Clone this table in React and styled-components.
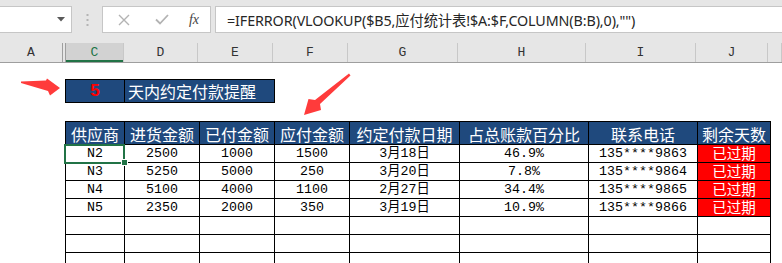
import React from "react";
import styled, { createGlobalStyle } from "styled-components";

const Global = createGlobalStyle`
  html, body { margin: 0; padding: 0; background: #fff; }
  body { width: 782px; height: 263px; overflow: hidden; }
`;

const Page = styled.div`
  position: relative;
  width: 782px;
  height: 263px;
  overflow: hidden;
  background: #fff;
  font-family: "Noto Sans", "Noto Sans CJK SC", sans-serif;
`;

const Toolbar = styled.div`
  display: flex;
  align-items: flex-start;
  height: 43px;
  box-sizing: border-box;
  padding-top: 6px;
  background: #e6e6e6;
`;

const Box = styled.div`
  height: 27px;
  box-sizing: border-box;
  background: #fff;
  border: 1px solid #c6c6c6;
  display: flex;
  align-items: center;
`;

const NameBox = styled(Box)`
  width: 72px;
  border-left: none;
  justify-content: flex-end;
  padding-right: 6px;
`;

const Dots = styled.div`
  width: 30px;
  height: 27px;
  display: flex;
  align-items: center;
  justify-content: center;
`;

const FxBox = styled(Box)`
  width: 109px;
  padding-left: 14px;
`;

const IconSlot = styled.div`
  width: ${(p) => p.$w}px;
  margin-left: ${(p) => p.$ml || 0}px;
  display: flex;
  align-items: center;
  justify-content: center;
`;

const Fx = styled.span`
  font-family: "Liberation Serif", serif;
  font-style: italic;
  font-size: 14px;
  color: #444;
`;

const FormulaBox = styled(Box)`
  flex: 1;
  margin-left: 4px;
  border-right: none;
  padding-left: 11px;
  font-size: 14.3px;
  color: #262626;
  white-space: nowrap;
  letter-spacing: -0.1px;
`;

const ColHeader = styled.div`
  display: flex;
  height: 19px;
  background: #e6e6e6;
  border-bottom: 1px solid #9e9e9e;
`;

const ColCell = styled.div`
  width: ${(p) => p.$w}px;
  flex: ${(p) => (p.$w ? "none" : 1)};
  box-sizing: border-box;
  border-right: 1px solid ${(p) => (p.$double ? "#9e9e9e" : "#c8c8c8")};
  display: flex;
  align-items: center;
  justify-content: center;
  font-family: "Liberation Mono", monospace;
  font-size: 13px;
  color: ${(p) => (p.$sel ? "#217346" : "#333")};
  background: ${(p) => (p.$sel ? "#d2d2d2" : "transparent")};
  box-shadow: ${(p) => (p.$sel ? "inset 0 -2px 0 #217346" : "none")};
`;

const Hidden = styled.div`
  width: 3px;
  box-sizing: border-box;
  border-right: 1px solid #9e9e9e;
`;

const Sheet = styled.div`
  display: flex;
  flex-direction: column;
  padding-left: 65px;
  padding-top: 16px;
`;

const TitleRow = styled.div`
  display: flex;
  width: 210px;
  height: 24px;
  box-sizing: border-box;
  border: 1px solid #000;
  background: #1f497d;
`;

const TitleNum = styled.div`
  width: 58px;
  border-right: 1px solid #000;
  display: flex;
  align-items: center;
  justify-content: center;
  color: #ff0000;
  font-weight: bold;
  font-size: 17px;
  font-family: "Liberation Sans", sans-serif;
`;

const TitleText = styled.div`
  flex: 1;
  padding-left: 3px;
  display: flex;
  align-items: center;
  color: #fff;
  font-size: 16px;
  line-height: 1;
  font-family: "Noto Sans CJK SC", sans-serif;
`;

const widths = [59, 75, 75, 75, 110, 129, 109, 73];

const Table = styled.div`
  margin-top: 18px;
  display: grid;
  grid-template-columns: ${widths.map((w) => w + "px").join(" ")};
  grid-template-rows: 23px;
  grid-auto-rows: 18px;
  width: max-content;
  border-left: 1px solid #000;
  border-top: 1px solid #000;
  position: relative;
`;

const Cell = styled.div`
  box-sizing: border-box;
  border-right: 1px solid #000;
  border-bottom: 1px solid #000;
  display: flex;
  align-items: center;
  justify-content: center;
  white-space: nowrap;
  line-height: 1;
  background: ${(p) => (p.$red ? "#ff0000" : "#fff")};
  color: ${(p) => (p.$red ? "#fff" : "#000")};
  font-family: ${(p) =>
    p.$red
      ? `"Noto Sans CJK SC", sans-serif`
      : `"Liberation Mono", "Noto Sans CJK SC", monospace`};
  font-size: ${(p) => (p.$red ? "14.5px" : "13.3px")};
`;

const HeadCell = styled(Cell)`
  background: #1f497d;
  color: #fff;
  font-family: "Noto Sans CJK SC", sans-serif;
  font-size: 16px;
  padding-top: 1px;
`;

const Selection = styled.div`
  position: absolute;
  left: -2px;
  top: 22px;
  width: 61px;
  height: 20px;
  box-sizing: border-box;
  border: 2px solid #217346;
  pointer-events: none;
`;

const Handle = styled.div`
  position: absolute;
  left: 55px;
  top: 37px;
  width: 5px;
  height: 5px;
  background: #217346;
  border: 1px solid #fff;
`;

const Overlay = styled.svg`
  position: absolute;
  left: 0;
  top: 0;
  pointer-events: none;
`;

const headers = ["供应商", "进货金额", "已付金额", "应付金额", "约定付款日期", "占总账款百分比", "联系电话", "剩余天数"];
const rows = [
  ["N2", "2500", "1000", "1500", "3月18日", "46.9%", "135****9863", "已过期"],
  ["N3", "5250", "5000", "250", "3月20日", "7.8%", "135****9864", "已过期"],
  ["N4", "5100", "4000", "1100", "2月27日", "34.4%", "135****9865", "已过期"],
  ["N5", "2350", "2000", "350", "3月19日", "10.9%", "135****9866", "已过期"],
  ["", "", "", "", "", "", "", ""],
  ["", "", "", "", "", "", "", ""],
  ["", "", "", "", "", "", "", ""],
];

const colHeads = [
  { l: "C", w: 58, sel: true },
  { l: "D", w: 74 },
  { l: "E", w: 75 },
  { l: "F", w: 75 },
  { l: "G", w: 110 },
  { l: "H", w: 128 },
  { l: "I", w: 110 },
  { l: "J", w: 72 },
];

export default function App() {
  return (
    <Page>
      <Global />
      <Toolbar>
        <NameBox>
          <svg width="8" height="5" viewBox="0 0 8 5">
            <path d="M0 0 L8 0 L4 4.5 Z" fill="#5a5a5a" />
          </svg>
        </NameBox>
        <Dots>
          <svg width="3" height="14" viewBox="0 0 3 14">
            <rect x="0.5" y="1" width="2" height="2" fill="#b4b4b4" />
            <rect x="0.5" y="6" width="2" height="2" fill="#b4b4b4" />
            <rect x="0.5" y="11" width="2" height="2" fill="#b4b4b4" />
          </svg>
        </Dots>
        <FxBox>
          <IconSlot $w={14}>
            <svg width="12" height="12" viewBox="0 0 12 12">
              <path d="M1 1 L11 11 M11 1 L1 11" stroke="#b3b3b3" strokeWidth="1.4" />
            </svg>
          </IconSlot>
          <IconSlot $w={38} $ml={12}>
            <svg width="14" height="11" viewBox="0 0 14 11">
              <path d="M1 5.5 L5 9.5 L13 1" stroke="#b3b3b3" strokeWidth="1.8" fill="none" />
            </svg>
          </IconSlot>
          <IconSlot $w={26}>
            <Fx>fx</Fx>
          </IconSlot>
        </FxBox>
        <FormulaBox>=IFERROR(VLOOKUP($B5,应付统计表!$A:$F,COLUMN(B:B),0),"")</FormulaBox>
      </Toolbar>
      <ColHeader>
        <ColCell $w={63} $double>A</ColCell>
        <Hidden />
        {colHeads.map((c) => (
          <ColCell key={c.l} $w={c.w} $sel={c.sel}>
            {c.l}
          </ColCell>
        ))}
        <ColCell />
      </ColHeader>
      <Sheet>
        <TitleRow>
          <TitleNum>5</TitleNum>
          <TitleText>天内约定付款提醒</TitleText>
        </TitleRow>
        <Table>
          {headers.map((h) => (
            <HeadCell key={h}>{h}</HeadCell>
          ))}
          {rows.map((r, i) =>
            r.map((v, j) => (
              <Cell key={i + "-" + j} $red={j === 7 && v !== ""}>
                {v}
              </Cell>
            ))
          )}
          <Selection />
          <Handle />
        </Table>
      </Sheet>
      <Overlay width="782" height="263" viewBox="0 0 782 263">
        <polygon points="21,81.5 46,80.5 47,78.5 60,88 50,95.5 48,91 21,83" fill="#ff3b3b" />
        <polygon points="349,73.5 350.5,75.5 320,104 321,110 304,115 308.5,99 315,100" fill="#ff3b3b" />
      </Overlay>
    </Page>
  );
}
